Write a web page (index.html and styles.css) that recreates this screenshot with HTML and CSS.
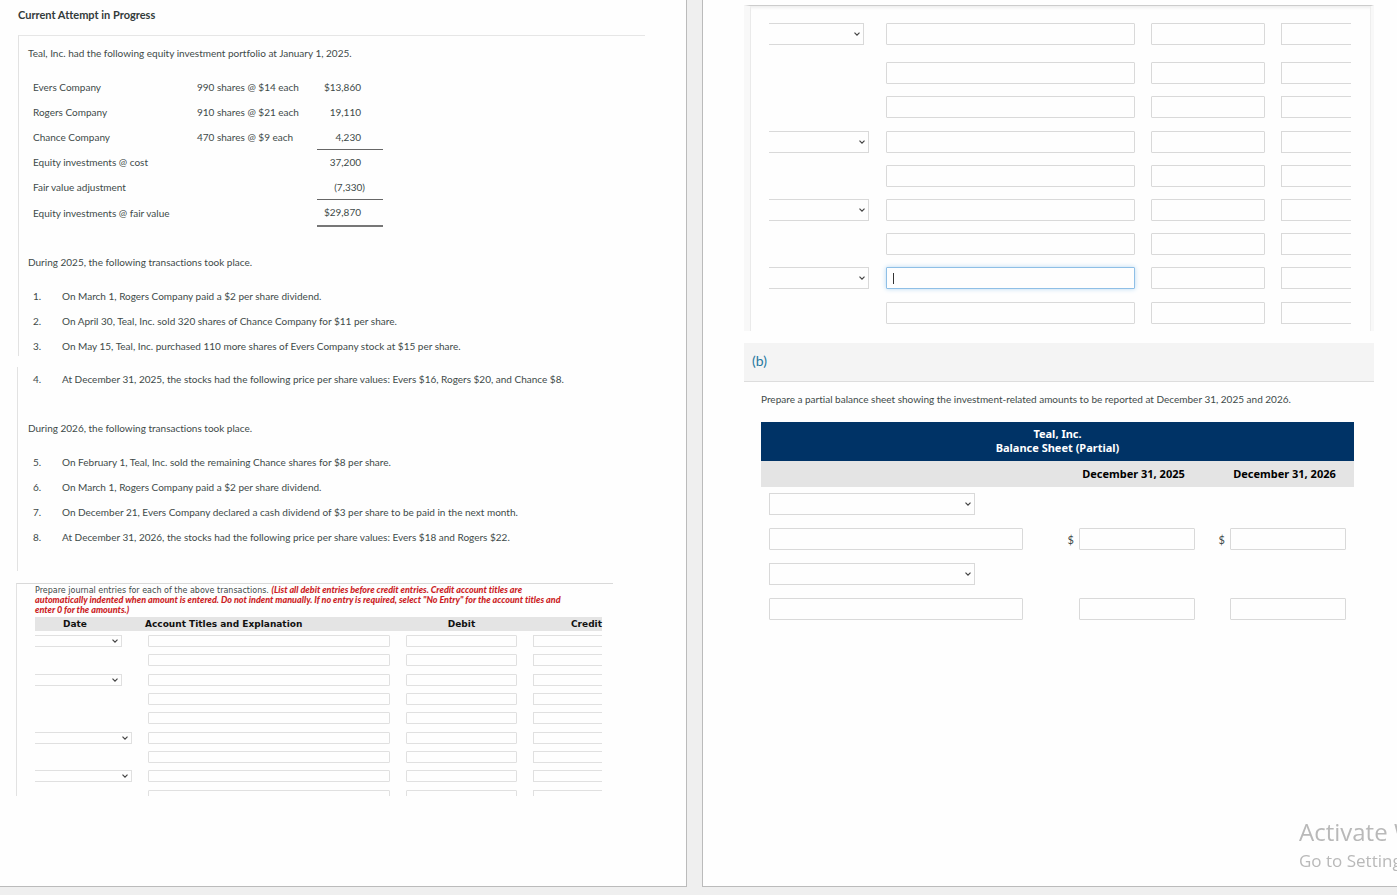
FILE: index.html
```
<!DOCTYPE html>
<html lang="en">
    <head>
        <meta charset="UTF-8" />
        <meta name="viewport" content="width=device-width, initial-scale=1.0" />
        <title>Current Attempt in Progress</title>
        <link rel="stylesheet" href="styles.css">
    </head>
    <body>
        <div class="pages">
            <!-- Left page: the question -->
            <main class="page page-left">
                <h1 class="attempt">Current Attempt in Progress</h1>

                <section class="card card-top">
                    <p>Teal, Inc. had the following equity investment portfolio at January 1, 2025.</p>
                    <table class="portfolio">
                        <tr><td class="name">Evers Company</td><td class="shares">990 shares @ $14 each</td><td class="amount">$13,860</td></tr>
                        <tr><td>Rogers Company</td><td>910 shares @ $21 each</td><td class="amount">19,110</td></tr>
                        <tr><td>Chance Company</td><td>470 shares @ $9 each</td><td class="amount line">4,230</td></tr>
                        <tr><td>Equity investments @ cost</td><td></td><td class="amount">37,200</td></tr>
                        <tr><td>Fair value adjustment</td><td></td><td class="amount negative line">(7,330)</td></tr>
                        <tr><td>Equity investments @ fair value</td><td></td><td class="amount total">$29,870</td></tr>
                    </table>
                    <p>During 2025, the following transactions took place.</p>
                    <ol class="steps">
                        <li><span class="num">1.</span>On March 1, Rogers Company paid a $2 per share dividend.</li>
                        <li><span class="num">2.</span>On April 30, Teal, Inc. sold 320 shares of Chance Company for $11 per share.</li>
                        <li><span class="num">3.</span>On May 15, Teal, Inc. purchased 110 more shares of Evers Company stock at $15 per share.</li>
                    </ol>
                </section>

                <section class="card card-rest">
                    <ol class="steps">
                        <li><span class="num">4.</span>At December 31, 2025, the stocks had the following price per share values: Evers $16, Rogers $20, and Chance $8.</li>
                    </ol>
                    <p>During 2026, the following transactions took place.</p>
                    <ol class="steps">
                        <li><span class="num">5.</span>On February 1, Teal, Inc. sold the remaining Chance shares for $8 per share.</li>
                        <li><span class="num">6.</span>On March 1, Rogers Company paid a $2 per share dividend.</li>
                        <li><span class="num">7.</span>On December 21, Evers Company declared a cash dividend of $3 per share to be paid in the next month.</li>
                        <li><span class="num">8.</span>At December 31, 2026, the stocks had the following price per share values: Evers $18 and Rogers $22.</li>
                    </ol>
                </section>

                <section class="journal">
                    <p class="directions">Prepare journal entries for each of the above transactions. <em>(List all debit entries before credit entries. Credit account titles are<br>automatically indented when amount is entered. Do not indent manually. If no entry is required, select "No Entry" for the account titles and<br>enter 0 for the amounts.)</em></p>
                    <table class="entries small">
                        <thead>
                            <tr><th class="date">Date</th><th class="title">Account Titles and Explanation</th><th class="debit">Debit</th><th class="credit">Credit</th></tr>
                        </thead>
                        <tbody>
                            <tr><td><select aria-label="Date 1"></select></td><td><input type="text" aria-label="Account 1"></td><td><input type="text" aria-label="Debit 1"></td><td><input type="text" aria-label="Credit 1"></td></tr>
                            <tr><td></td><td><input type="text" aria-label="Account 2"></td><td><input type="text" aria-label="Debit 2"></td><td><input type="text" aria-label="Credit 2"></td></tr>
                            <tr><td><select aria-label="Date 2"></select></td><td><input type="text" aria-label="Account 3"></td><td><input type="text" aria-label="Debit 3"></td><td><input type="text" aria-label="Credit 3"></td></tr>
                            <tr><td></td><td><input type="text" aria-label="Account 4"></td><td><input type="text" aria-label="Debit 4"></td><td><input type="text" aria-label="Credit 4"></td></tr>
                            <tr><td></td><td><input type="text" aria-label="Account 5"></td><td><input type="text" aria-label="Debit 5"></td><td><input type="text" aria-label="Credit 5"></td></tr>
                            <tr><td><select class="wide" aria-label="Date 3"></select></td><td><input type="text" aria-label="Account 6"></td><td><input type="text" aria-label="Debit 6"></td><td><input type="text" aria-label="Credit 6"></td></tr>
                            <tr><td></td><td><input type="text" aria-label="Account 7"></td><td><input type="text" aria-label="Debit 7"></td><td><input type="text" aria-label="Credit 7"></td></tr>
                            <tr><td><select class="wide" aria-label="Date 4"></select></td><td><input type="text" aria-label="Account 8"></td><td><input type="text" aria-label="Debit 8"></td><td><input type="text" aria-label="Credit 8"></td></tr>
                            <tr><td></td><td><input type="text" aria-label="Account 9"></td><td><input type="text" aria-label="Debit 9"></td><td><input type="text" aria-label="Credit 9"></td></tr>
                        </tbody>
                    </table>
                </section>
            </main>

            <!-- Right page: rest of the journal and part (b) -->
            <main class="page page-right">
                <section class="journal-more">
                    <table class="entries">
                        <tbody>
                            <tr class="first"><td class="date"><select aria-label="Date 5"></select></td><td class="title"><input type="text" aria-label="Account 10"></td><td class="debit"><input type="text" aria-label="Debit 10"></td><td class="credit"><input type="text" aria-label="Credit 10"></td></tr>
                            <tr><td></td><td><input type="text" aria-label="Account 11"></td><td><input type="text" aria-label="Debit 11"></td><td><input type="text" aria-label="Credit 11"></td></tr>
                            <tr><td></td><td><input type="text" aria-label="Account 12"></td><td><input type="text" aria-label="Debit 12"></td><td><input type="text" aria-label="Credit 12"></td></tr>
                            <tr><td><select class="wide" aria-label="Date 6"></select></td><td><input type="text" aria-label="Account 13"></td><td><input type="text" aria-label="Debit 13"></td><td><input type="text" aria-label="Credit 13"></td></tr>
                            <tr><td></td><td><input type="text" aria-label="Account 14"></td><td><input type="text" aria-label="Debit 14"></td><td><input type="text" aria-label="Credit 14"></td></tr>
                            <tr><td><select class="wide" aria-label="Date 7"></select></td><td><input type="text" aria-label="Account 15"></td><td><input type="text" aria-label="Debit 15"></td><td><input type="text" aria-label="Credit 15"></td></tr>
                            <tr><td></td><td><input type="text" aria-label="Account 16"></td><td><input type="text" aria-label="Debit 16"></td><td><input type="text" aria-label="Credit 16"></td></tr>
                            <tr><td><select class="wide" aria-label="Date 8"></select></td><td><input type="text" class="active" aria-label="Account 17"></td><td><input type="text" aria-label="Debit 17"></td><td><input type="text" aria-label="Credit 17"></td></tr>
                            <tr><td></td><td><input type="text" aria-label="Account 18"></td><td><input type="text" aria-label="Debit 18"></td><td><input type="text" aria-label="Credit 18"></td></tr>
                        </tbody>
                    </table>
                </section>

                <h2 class="part">(b)</h2>

                <section class="balance">
                    <p>Prepare a partial balance sheet showing the investment-related amounts to be reported at December 31, 2025 and 2026.</p>
                    <table class="sheet">
                        <colgroup>
                            <col>
                            <col class="year-col">
                            <col class="year-col">
                        </colgroup>
                        <thead>
                            <tr class="company"><th colspan="3">Teal, Inc.<br>Balance Sheet (Partial)</th></tr>
                            <tr class="years"><th></th><th class="year">December 31, 2025</th><th class="year">December 31, 2026</th></tr>
                        </thead>
                        <tbody>
                            <tr><td><select aria-label="Section 1"></select></td><td></td><td></td></tr>
                            <tr>
                                <td><input type="text" class="account" aria-label="Line 1"></td>
                                <td><label class="money">$<input type="text" aria-label="2025 amount 1"></label></td>
                                <td><label class="money">$<input type="text" aria-label="2026 amount 1"></label></td>
                            </tr>
                            <tr><td><select aria-label="Section 2"></select></td><td></td><td></td></tr>
                            <tr>
                                <td><input type="text" class="account" aria-label="Line 2"></td>
                                <td><div class="money"><input type="text" aria-label="2025 amount 2"></div></td>
                                <td><div class="money"><input type="text" aria-label="2026 amount 2"></div></td>
                            </tr>
                        </tbody>
                    </table>
                </section>
            </main>
        </div>

        <div class="watermark">
            <div class="big">Activate Windows</div>
            <div>Go to Settings</div>
        </div>
    </body>
</html>
```

FILE: styles.css
```
* {
    box-sizing: border-box;
}

body {
    margin: 0;
    background-color: #efefef;
    color: #404a49;
    font-family: Lato, sans-serif;
    font-size: 10px;
    font-variant-ligatures: none;
    line-height: 15px;
    overflow-x: hidden;
}

p, h1, h2, ol {
    margin: 0;
    padding: 0;
}

table {
    border-collapse: separate;
    border-spacing: 0;
}

td, th {
    padding: 0;
}

/* Two pages side by side */
.pages {
    display: grid;
    grid-template-columns: minmax(0, 687fr) minmax(0, 695fr);
    column-gap: 15px;
    min-height: 100vh;
    padding-bottom: 8px;
}

.page {
    background-color: #fefefe;
    border-bottom: 1px solid #bbbbbb;
}

.page-left {
    border-right: 1px solid #bbbbbb;
    padding: 7px 41px 0 16px;
}

.page-right {
    border-left: 1px solid #bbbbbb;
    padding: 5px 23px 0 41px;
}

/* Question text */
.attempt {
    color: #333b3b;
    font-size: 11px;
    font-weight: bold;
    padding-left: 2px;
    height: 28px;
}

.card {
    border-left: 1px solid #e2e2e2;
    padding-left: 9px;
}

.card-top {
    border-top: 1px solid #e6e6e6;
    margin-left: 2px;
    padding-top: 10px;
    height: 321px;
}

.card-rest {
    margin-top: 11px;
    margin-left: 1px;
    padding-left: 10px;
    height: 204px;
}

.portfolio {
    margin: 14px 0 28px;
}

.portfolio td {
    height: 25px;
    padding-left: 5px;
}

.portfolio .name {
    width: 164px;
}

.portfolio .shares {
    width: 125px;
}

.portfolio .amount {
    width: 66px;
    padding: 0 22px 0 0;
    text-align: right;
}

.portfolio .negative {
    padding-right: 18px;
}

.portfolio .line {
    border-bottom: 1px solid #666666;
}

.portfolio .total {
    height: 27px;
    border-bottom: 2px solid #777777;
}

.steps {
    list-style: none;
    margin-top: 14px;
}

.steps li {
    display: flex;
    line-height: 25px;
    padding-left: 5px;
}

.card-rest .steps:first-child {
    margin-top: 0;
    margin-bottom: 29px;
}

.num {
    width: 29px;
}

/* Boxes */
input, select {
    display: block;
    width: 100%;
    height: 22px;
    margin: 0;
    padding: 0 6px;
    background-color: #fefefe;
    border: 1px solid #d9d9d9;
    border-radius: 1px;
    color: #444444;
    font-size: 11px;
}

select {
    appearance: none;
    padding: 0;
    border-radius: 0;
    background-image: url("data:image/svg+xml,%3Csvg xmlns='http://www.w3.org/2000/svg' width='6' height='4' viewBox='0 0 6 4'%3E%3Cpath d='M.5 .6L3 3.1L5.5 .6' fill='none' stroke='%23444' stroke-width='1.2'/%3E%3C/svg%3E");
    background-repeat: no-repeat;
    background-position: right 3px center;
}

/* Journal entries */
.entries {
    width: 100%;
    table-layout: fixed;
}

.entries td {
    vertical-align: top;
    padding-right: 16px;
}

.entries td:last-child {
    padding-right: 0;
}

.entries select {
    border-left: 0;
}

.entries td:last-child input {
    border-right: 0;
    border-radius: 0;
}

.journal {
    margin-top: 12px;
    margin-right: 32px;
    height: 213px;
    overflow: hidden;
    border-top: 1px solid #d9d9d9;
    border-left: 1px solid #e2e2e2;
    padding: 1px 11px 0 18px;
}

.directions {
    font-family: "DejaVu Sans", sans-serif;
    font-size: 8px;
    line-height: 9px;
    white-space: nowrap;
    margin-bottom: 2px;
}

.directions em {
    color: #cc1f26;
    font-family: Lato, sans-serif;
    font-size: 9px;
    font-weight: 900;
}

.small {
    height: 188px;
}

.small th {
    height: 14px;
    background-color: #e4e4e4;
    color: #111111;
    font-family: "DejaVu Sans", sans-serif;
    font-size: 9px;
    line-height: 12px;
}

.small .date {
    width: 113px;
    padding-right: 33px;
}

.small .title {
    text-align: left;
    text-indent: -3px;
}

.small .debit {
    width: 127px;
    padding-right: 16px;
}

.small .credit {
    width: 69px;
    text-align: right;
}

.small tbody td {
    height: 19px;
    padding-top: 4px;
}

.small input, .small select {
    height: 12px;
    border-color: #e0e0e0;
}

.small select {
    width: 87px;
}

.small .wide {
    width: 97px;
}

.journal-more {
    height: 326px;
    padding: 17px 20px 0 19px;
    border-top: 1px solid #cccccc;
    border-left: 6px solid #f8f8f8;
    border-right: 3px solid #f8f8f8;
    box-shadow: inset 0 3px 3px -1px #eeeeee, inset 1px 0 0 #e9e9e9, inset -1px 0 0 #eeeeee;
}

.journal-more .entries {
    height: 313px;
}

.journal-more .date {
    width: 117px;
}

.journal-more .debit {
    width: 130px;
}

.journal-more .credit {
    width: 70px;
}

.journal-more td {
    height: 34px;
}

.journal-more .first td {
    height: 39px;
}

.journal-more select {
    width: 95px;
}

.journal-more .wide {
    width: 100px;
}

/* The box being typed in */
.active {
    border-color: #8fbfe6;
    box-shadow: 0 0 5px #b9daf3;
    background-image: linear-gradient(#333333, #333333);
    background-size: 1px 11px;
    background-position: 6px 5px;
    background-repeat: no-repeat;
}

/* Part (b) */
.part {
    margin-top: 12px;
    height: 39px;
    padding-left: 8px;
    background-color: #f4f4f4;
    border-bottom: 1px solid #dddddd;
    color: #26789f;
    font-size: 14px;
    font-weight: normal;
    line-height: 36px;
}

.balance {
    padding: 10px 20px 0 17px;
}

.sheet {
    width: 100%;
    margin-top: 15px;
    table-layout: fixed;
}

.year-col {
    width: 151px;
}

.sheet th {
    font-family: "Noto Sans", sans-serif;
    font-size: 11px;
}

.company th {
    height: 39px;
    padding-bottom: 2px;
    background-color: #003366;
    color: #ffffff;
    line-height: 14px;
}

.years th {
    height: 26px;
    padding-bottom: 2px;
    background-color: #e4e4e4;
    color: #000000;
}

.sheet .year {
    padding-right: 8px;
    padding-left: 20px;
}

.sheet td {
    height: 35px;
    padding: 6px 8px 0;
    vertical-align: top;
}

.sheet select {
    width: 206px;
}

.sheet .account {
    width: 254px;
}

.money {
    display: flex;
    justify-content: flex-end;
    align-items: center;
    gap: 5px;
    font-size: 11px;
}

.money input {
    width: 116px;
}

.watermark {
    position: fixed;
    right: 0;
    bottom: 22px;
    width: 98px;
    overflow: hidden;
    white-space: nowrap;
    color: #b9b9b9;
    font-family: "Open Sans", sans-serif;
    font-size: 17px;
    line-height: 24px;
}

.watermark .big {
    font-size: 24px;
    line-height: 34px;
}
```
